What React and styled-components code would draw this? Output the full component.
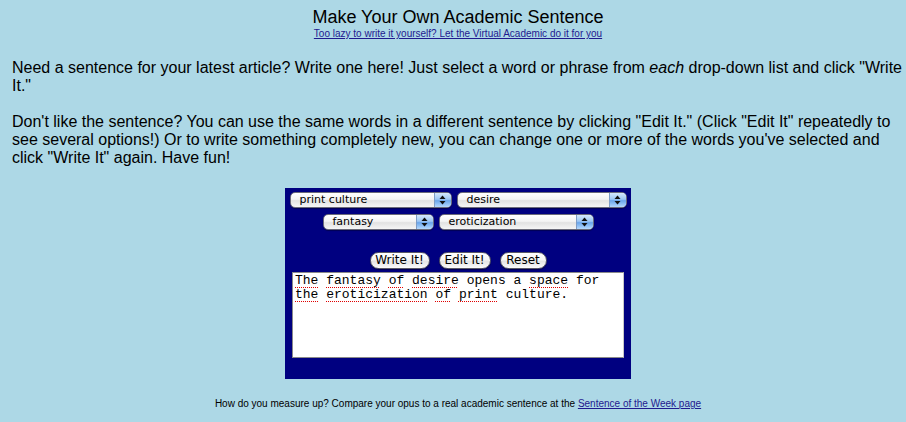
import React from "react";
import styled, { createGlobalStyle } from "styled-components";

const Global = createGlobalStyle`
  html, body { margin: 0; padding: 0; }
  body {
    background: #add8e6;
    font-family: "Liberation Sans", Arial, Helvetica, sans-serif;
    color: #000;
  }
`;

const Page = styled.div`
  padding: 7px 2px 0 12px;
`;

const Title = styled.h1`
  margin: 0;
  font-size: 18px;
  font-weight: normal;
  line-height: 21px;
  text-align: center;
`;

const SubLink = styled.a`
  display: block;
  width: fit-content;
  margin: 0 auto;
  font-size: 10px;
  line-height: 12px;
  color: #1f1a8f;
  text-decoration: underline;
`;

const Para = styled.p`
  margin: ${(p) => p.$top}px 0 0;
  font-size: 16px;
  line-height: 18px;
`;

const Panel = styled.div`
  width: 346px;
  height: 191px;
  box-sizing: border-box;
  margin: 21px auto 0;
  background: #000080;
  padding-top: 4px;
  display: flex;
  flex-direction: column;
  align-items: center;
`;

const SelectRow = styled.div`
  display: flex;
  justify-content: center;
  gap: 5px;
  margin-top: ${(p) => p.$top}px;
`;

const SelectBox = styled.div`
  display: flex;
  align-items: stretch;
  width: ${(p) => p.$w}px;
  height: 16px;
  box-sizing: border-box;
  border-radius: 5px;
  border: 1px solid #6b6b7a;
  background: linear-gradient(#ffffff 0%, #f4f4f4 45%, #e2e2e2 55%, #f6f6f6 100%);
  overflow: hidden;
  font-family: "DejaVu Sans", "Lucida Grande", sans-serif;
  font-size: 11px;
  box-shadow: 0 1px 1px rgba(0, 0, 0, 0.35);
`;

const SelectLabel = styled.span`
  flex: 1;
  padding-left: 9px;
  line-height: 14px;
  white-space: nowrap;
`;

const SelectArrow = styled.span`
  width: 16px;
  display: flex;
  align-items: center;
  justify-content: center;
  border-left: 1px solid #7d9cc7;
  background: linear-gradient(#d5e8fc 0%, #9cc6f4 45%, #6aa5ea 55%, #b5daff 100%);
`;

const ButtonRow = styled.div`
  display: flex;
  justify-content: center;
  gap: 9px;
  margin-top: 22px;
`;

const Button = styled.button`
  width: ${(p) => p.$w}px;
  height: 17px;
  padding: 0;
  box-sizing: border-box;
  border: 1px solid #5a5a66;
  border-radius: 9px;
  background: linear-gradient(#ffffff 0%, #f6f6f6 45%, #e4e4e4 55%, #fbfbfb 100%);
  font-family: "DejaVu Sans", "Lucida Grande", sans-serif;
  font-size: 12px;
  line-height: 15px;
  color: #000;
  box-shadow: 0 1px 1px rgba(0, 0, 0, 0.4);
`;

const TextBox = styled.div`
  width: 332px;
  height: 86px;
  box-sizing: border-box;
  margin-top: 3px;
  background: #fff;
  border: 1px solid #8a8a8a;
  border-right-color: #c8c8c8;
  padding: 1px 2px;
  font-family: "Liberation Mono", "Courier New", monospace;
  font-size: 13px;
  line-height: 14px;
  white-space: pre-wrap;
`;

const Misspelt = styled.span`
  text-decoration: underline dotted #e00000;
  text-underline-offset: 3px;
  text-decoration-thickness: 1px;
`;

const Footer = styled.p`
  margin: 19px 0 0;
  font-size: 10px;
  line-height: 12px;
  text-align: center;
`;

const FooterLink = styled.a`
  color: #1f1a8f;
  text-decoration: underline;
`;

function Arrows() {
  return (
    <svg width="7" height="10" viewBox="0 0 7 10">
      <path d="M3.5 0.5 L6.5 4 L0.5 4 Z" fill="#111" />
      <path d="M3.5 9.5 L6.5 6 L0.5 6 Z" fill="#111" />
    </svg>
  );
}

function Select({ w, value }) {
  return (
    <SelectBox $w={w} role="combobox">
      <SelectLabel>{value}</SelectLabel>
      <SelectArrow>
        <Arrows />
      </SelectArrow>
    </SelectBox>
  );
}

const sentence = [
  ["The", true],
  [" "],
  ["fantasy", true],
  [" "],
  ["of", true],
  [" "],
  ["desire", true],
  [" opens a "],
  ["space", true],
  [" for "],
  ["the", true],
  [" "],
  ["eroticization", true],
  [" "],
  ["of", true],
  [" "],
  ["print", true],
  [" culture."],
];

export default function App() {
  return (
    <>
      <Global />
      <Page>
        <Title>Make Your Own Academic Sentence</Title>
        <SubLink href="#">Too lazy to write it yourself? Let the Virtual Academic do it for you</SubLink>
        <Para $top={19}>
          Need a sentence for your latest article? Write one here! Just select a word or phrase from{" "}
          <i>each</i> drop-down list and click "Write It."
        </Para>
        <Para $top={18}>
          Don't like the sentence? You can use the same words in a different sentence by clicking "Edit
          It." (Click "Edit It" repeatedly to see several options!) Or to write something completely new,
          you can change one or more of the words you've selected and click "Write It" again. Have fun!
        </Para>
        <Panel>
          <SelectRow $top={0}>
            <Select w={162} value="print culture" />
            <Select w={170} value="desire" />
          </SelectRow>
          <SelectRow $top={6}>
            <Select w={111} value="fantasy" />
            <Select w={155} value="eroticization" />
          </SelectRow>
          <ButtonRow>
            <Button $w={60}>Write It!</Button>
            <Button $w={52}>Edit It!</Button>
            <Button $w={47}>Reset</Button>
          </ButtonRow>
          <TextBox role="textbox">
            {sentence.map(([t, bad], i) => (bad ? <Misspelt key={i}>{t}</Misspelt> : <span key={i}>{t}</span>))}
          </TextBox>
        </Panel>
        <Footer>
          How do you measure up? Compare your opus to a real academic sentence at the{" "}
          <FooterLink href="#">Sentence of the Week page</FooterLink>
        </Footer>
      </Page>
    </>
  );
}
